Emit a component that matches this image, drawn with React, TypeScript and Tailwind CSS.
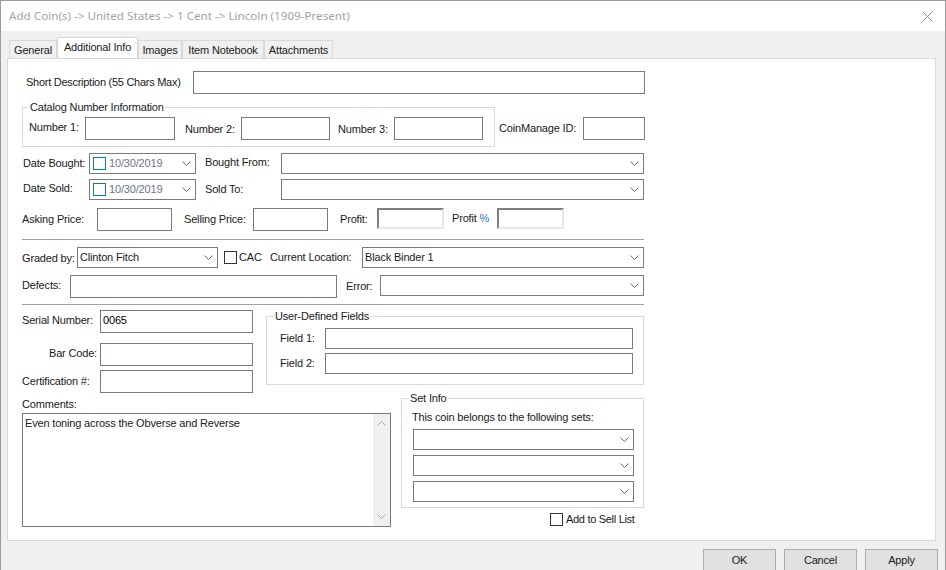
import type { ReactNode } from 'react';

const Chevron = ({ className = '' }: { className?: string }) => (
  <svg width="9" height="6" viewBox="0 0 9 6" className={className} fill="none" stroke="#666666" strokeWidth="1">
    <path d="M0.5 0.5 L4.5 4.5 L8.5 0.5" />
  </svg>
);

const Field = ({ className = '', children }: { className?: string; children?: ReactNode }) => (
  <div className={`shrink-0 border border-[#7a7a7a] bg-white pl-[2px] text-black leading-[19px] ${className || ''}`}>{children}</div>
);

const Combo = ({ className = '', children }: { className?: string; children?: ReactNode }) => (
  <div className={`h-[21px] shrink-0 flex items-center justify-between border border-[#7a7a7a] bg-white pl-[2px] pr-[4px] ${className}`}>
    <span className="pb-[1px]">{children}</span>
    <Chevron />
  </div>
);

const ReadOnly = ({ className = '' }: { className?: string }) => (
  <div className={`h-[21px] shrink-0 border-2 border-t-[#808080] border-l-[#808080] border-r-[#e8e8e8] border-b-[#e8e8e8] bg-white ${className}`} />
);

const DateBox = () => (
  <div className="h-[21px] w-[107px] shrink-0 flex items-center justify-between border border-[#7a7a7a] bg-white pl-[3px] pr-[4px]">
    <div className="w-[13px] h-[13px] border border-[#0078d7]" />
    <span className="text-[#6d7680] ml-[3px] mr-auto">10/30/2019</span>
    <Chevron />
  </div>
);

const Check = () => <div className="w-[13px] h-[13px] shrink-0 border border-[#333333] bg-white" />;

const Tab = ({ label, active, className = '' }: { label: string; active?: boolean; className?: string }) => (
  <div className={`text-center border-t border-x border-[#d9d9d9] ${active ? 'h-[21px] bg-white relative z-10 pt-[1px] -mb-[1px]' : 'h-[18px] mt-[3px] bg-[#f0f0f0] pt-[1px]'} ${className}`}>
    {label}
  </div>
);

const Legend = ({ className = '', children }: { className?: string; children: ReactNode }) => (
  <span className={`absolute -top-[8px] bg-white px-[1px] leading-[15px] ${className}`}>{children}</span>
);

const Sep = () => <div className="w-[622px] border-t border-[#a0a0a0]" />;

export default function App() {
  return (
    <div className="w-[946px] h-[570px] overflow-hidden flex flex-col bg-[#f0f0f0] border-t border-x border-[#9a9a9a] text-[11px] tracking-[-0.17px] whitespace-nowrap text-[#1a1a1a] font-['Liberation_Sans',sans-serif]">
      {/* title bar */}
      <div className="h-[30px] shrink-0 bg-white flex items-center justify-between pl-[8px] pr-[12px]">
        <span className="text-[11.65px] tracking-normal text-[#a3a3a3] font-['Noto_Sans',sans-serif]">Add Coin(s) -&gt; United States -&gt; 1 Cent -&gt; Lincoln (1909-Present)</span>
        <svg width="11" height="11" viewBox="0 0 11 11" stroke="#8a8a8a" strokeWidth="1" fill="none">
          <path d="M0.5 0.5 L10.5 10.5 M10.5 0.5 L0.5 10.5" />
        </svg>
      </div>

      {/* tabs */}
      <div className="flex h-[21px] pt-[6px] box-content shrink-0 pl-[8px] pr-[8px]">
        <Tab label="General" className="w-[48px]" />
        <Tab label="Additional Info" active className="w-[81px]" />
        <Tab label="Images" className="w-[44px]" />
        <Tab label="Item Notebook" className="w-[82px]" />
        <Tab label="Attachments" className="w-[69px]" />
      </div>

      <div className="ml-[6px] mr-[9px] h-[483px] shrink-0 border border-[#d9d9d9] bg-white pl-[14px] flex flex-col">
        <div className="flex items-center mt-[12px] ml-[4px]">
          <span className="w-[167px] tracking-[-0.27px]">Short Description (55 Chars Max)</span>
          <Field className="w-[452px] h-[23px]" />
        </div>

        <div className="flex mt-[13px]">
          <div className="relative w-[473px] h-[40px] border border-[#d9d9d9] pl-[6px] pt-[9px] flex items-start">
            <Legend className="left-[6px]">Catalog Number Information</Legend>
            <span className="w-[56px] leading-[21px]">Number 1:</span>
            <Field className="w-[90px] h-[23px]" />
            <span className="w-[66px] pl-[10px] leading-[24px]">Number 2:</span>
            <Field className="w-[89px] h-[23px]" />
            <span className="w-[64px] pl-[8px] leading-[24px]">Number 3:</span>
            <Field className="w-[89px] h-[23px]" />
          </div>
          <div className="flex items-center ml-[4px] mt-[10px] h-[23px]">
            <span className="w-[84px]">CoinManage ID:</span>
            <Field className="w-[62px] h-[23px]" />
          </div>
        </div>

        <div className="flex items-center mt-[6px] ml-[1px]">
          <span className="w-[66px]">Date Bought:</span>
          <DateBox />
          <span className="w-[85px] pl-[9px] pb-[2px]">Bought From:</span>
          <Combo className="w-[363px]" />
        </div>
        <div className="flex items-center mt-[5px] ml-[1px]">
          <span className="w-[66px] pb-[2px]">Date Sold:</span>
          <DateBox />
          <span className="w-[85px] pl-[9px]">Sold To:</span>
          <Combo className="w-[363px]" />
        </div>

        <div className="flex items-center mt-[8px] h-[23px]">
          <span className="w-[75px]">Asking Price:</span>
          <Field className="w-[75px] h-[23px]" />
          <span className="w-[81px] pl-[12px]">Selling Price:</span>
          <Field className="w-[75px] h-[23px]" />
          <span className="w-[49px] pl-[12px]">Profit:</span>
          <ReadOnly className="w-[67px] self-start" />
          <span className="w-[53px] pl-[8px] pb-[3px]">Profit <span className="text-[#2a6fc0]">%</span></span>
          <ReadOnly className="w-[67px] self-start" />
        </div>

        <div className="mt-[8px]"><Sep /></div>

        <div className="flex items-center mt-[7px]">
          <span className="w-[55px] pt-[1px]">Graded by:</span>
          <Combo className="w-[141px]">Clinton Fitch</Combo>
          <div className="ml-[6px]"><Check /></div>
          <span className="w-[33px] pl-[2px]">CAC</span>
          <span className="w-[92px]">Current Location:</span>
          <Combo className="w-[282px]">Black Binder 1</Combo>
        </div>

        <div className="flex mt-[7px] h-[23px]">
          <span className="w-[48px] leading-[20px]">Defects:</span>
          <Field className="w-[267px] h-[23px]" />
          <span className="w-[43px] pl-[9px] leading-[22px]">Error:</span>
          <Combo className="w-[264px]" />
        </div>

        <div className="mt-[6px]"><Sep /></div>

        <div className="flex h-[88px] pt-[5px] box-border">
          <div className="w-[231px] shrink-0 flex flex-col">
            <div className="flex items-center">
              <span className="w-[78px] pb-[3px]">Serial Number:</span>
              <Field className="w-[153px] h-[23px]">0065</Field>
            </div>
            <div className="flex items-center mt-[10px]">
              <span className="w-[78px] pl-[27px] pb-[2px]">Bar Code:</span>
              <Field className="w-[153px] h-[23px]" />
            </div>
            <div className="flex items-center mt-[4px]">
              <span className="w-[78px]">Certification #:</span>
              <Field className="w-[153px] h-[23px]" />
            </div>
          </div>
          <div className="relative ml-[13px] mt-[6px] w-[378px] h-[69px] border border-[#d9d9d9] pl-[13px] pt-[11px]">
            <Legend className="left-[7px]">User-Defined Fields</Legend>
            <div className="flex items-center">
              <span className="w-[45px]">Field 1:</span>
              <Field className="w-[308px] h-[21px]" />
            </div>
            <div className="flex items-center mt-[4px]">
              <span className="w-[45px]">Field 2:</span>
              <Field className="w-[308px] h-[21px]" />
            </div>
          </div>
        </div>

        <div className="flex mt-[5px]">
          <div className="w-[369px] shrink-0">
            <div className="h-[15px] leading-[13px]">Comments:</div>
            <div className="h-[114px] border border-[#7a7a7a] flex justify-between">
              <span className="pl-[2px] pt-[1px]">Even toning across the Obverse and Reverse</span>
              <div className="w-[17px] bg-[#f0f0f0] flex flex-col items-center justify-between py-[6px]">
                <Chevron className="rotate-180 opacity-50" />
                <Chevron className="opacity-50" />
              </div>
            </div>
          </div>
          <div className="ml-[10px] w-[243px] shrink-0 flex flex-col">
            <div className="relative h-[110px] border border-[#d9d9d9] pl-[11px] pt-[10px]">
              <Legend className="left-[7px]">Set Info</Legend>
              <div className="h-[20px] -ml-[1px]">This coin belongs to the following sets:</div>
              <Combo className="w-[221px]" />
              <Combo className="w-[221px] mt-[5px]" />
              <Combo className="w-[221px] mt-[5px]" />
            </div>
            <div className="flex items-center mt-[3px] ml-[149px]">
              <Check />
              <span className="pl-[3px] tracking-[-0.3px]">Add to Sell List</span>
            </div>
          </div>
        </div>
      </div>

      <div className="flex justify-end gap-[8px] mt-[8px] pr-[7px]">
        {['OK', 'Cancel', 'Apply'].map(b => (
          <div key={b} className="w-[73px] h-[24px] border border-[#adadad] bg-[#e1e1e1] text-center pt-[2px]">{b}</div>
        ))}
      </div>
    </div>
  );
}
